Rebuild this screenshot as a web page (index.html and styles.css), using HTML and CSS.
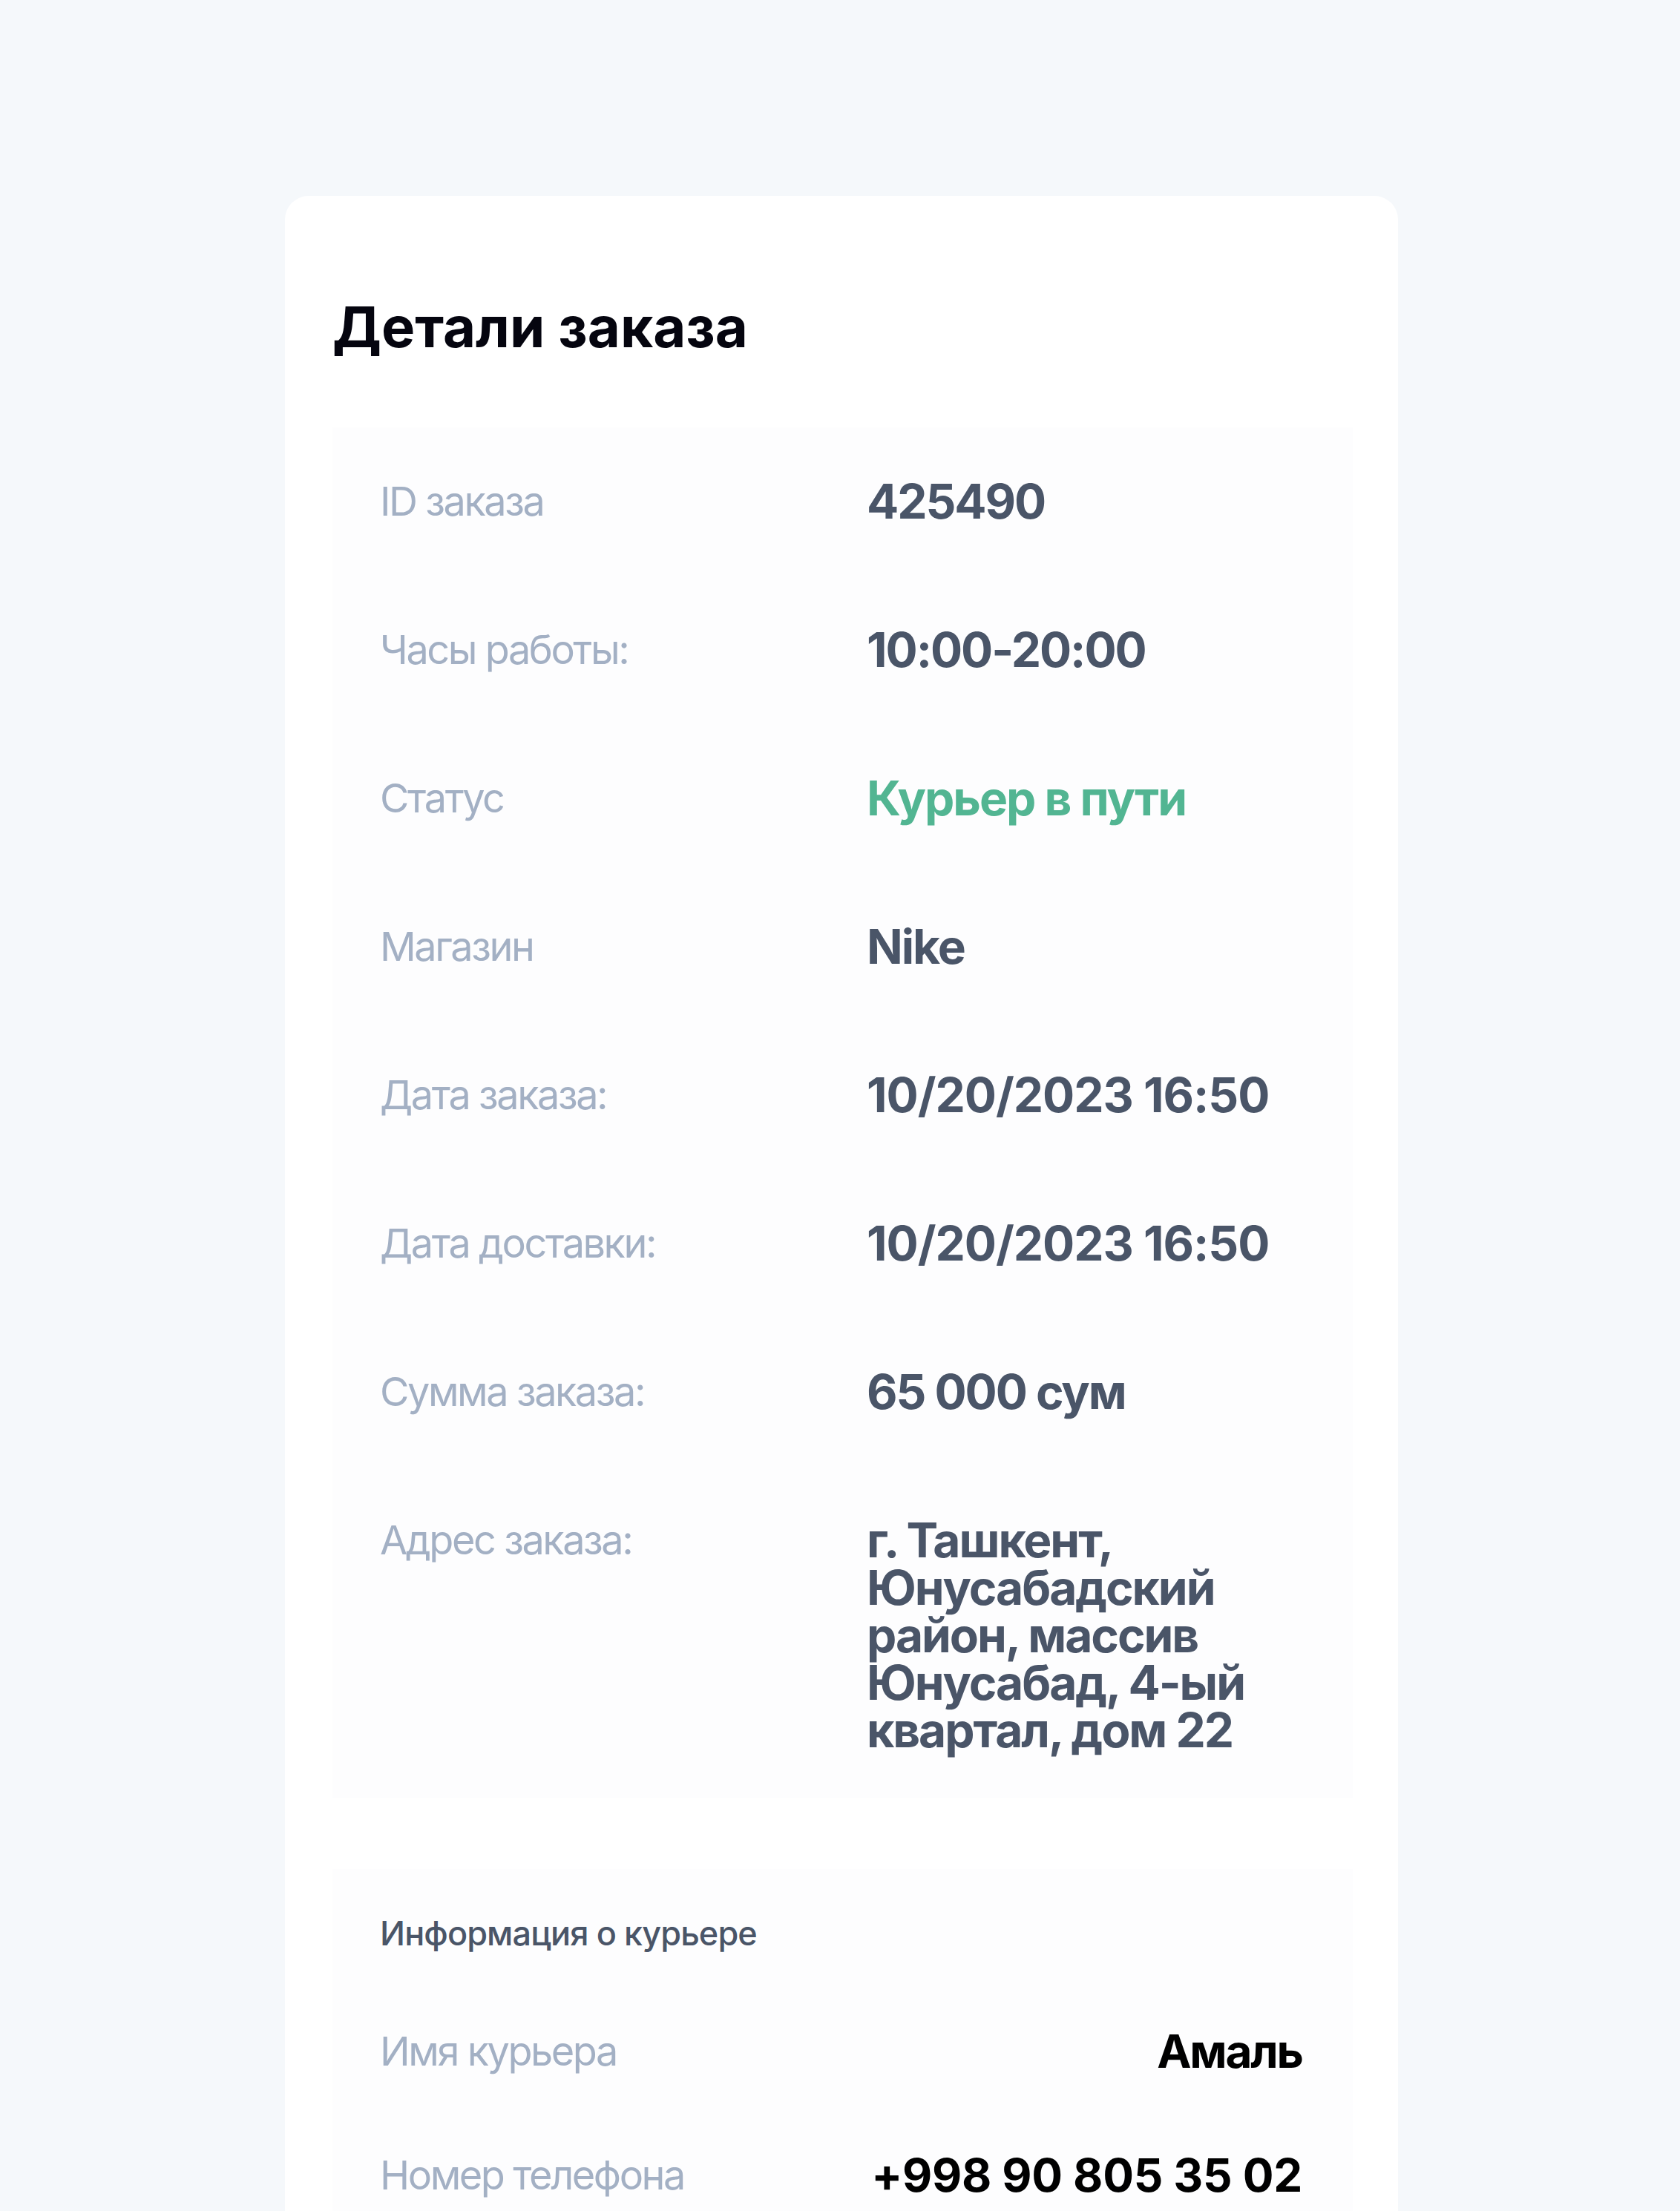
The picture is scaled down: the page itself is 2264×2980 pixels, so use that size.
FILE: index.html
```html
<!DOCTYPE html>
<html lang="ru">
<head>
<meta charset="utf-8">
<title>Детали заказа</title>
<link rel="stylesheet" href="styles.css">
</head>
<body>
<main class="card">
  <h1 class="card-title">Детали заказа</h1>

  <section class="panel details">
    <div class="row"><div class="label">ID заказа</div><div class="value">425490</div></div>
    <div class="row"><div class="label">Часы работы:</div><div class="value">10:00-20:00</div></div>
    <div class="row"><div class="label">Статус</div><div class="value status">Курьер в пути</div></div>
    <div class="row"><div class="label">Магазин</div><div class="value">Nike</div></div>
    <div class="row"><div class="label">Дата заказа:</div><div class="value date">10/20/2023 16:50</div></div>
    <div class="row"><div class="label">Дата доставки:</div><div class="value date">10/20/2023 16:50</div></div>
    <div class="row"><div class="label">Сумма заказа:</div><div class="value">65 000 сум</div></div>
    <div class="row"><div class="label">Адрес заказа:</div><div class="value">г. Ташкент, Юнусабадский район, массив Юнусабад, 4-ый квартал, дом 22</div></div>
  </section>

  <section class="panel courier">
    <h2 class="courier-title">Информация о курьере</h2>
    <div class="c-row"><div class="label">Имя курьера</div><div class="c-value">Амаль</div></div>
    <div class="c-row"><div class="label">Номер телефона</div><div class="c-value phone">+998 90 805 35 02</div></div>
  </section>
</main>
</body>
</html>
```

FILE: styles.css
```css
* { box-sizing: border-box; }

html, body {
  margin: 0;
  padding: 0;
  background: #f5f8fb;
  font-family: Inter, "Noto Sans", "Liberation Sans", sans-serif;
}

.card {
  width: 1500px;
  margin: 264px 0 0 384px;
  padding: 130px 61px 64px 64px;
  background: #ffffff;
  border-radius: 32px 32px 0 0;
}

.card-title {
  margin: 0 0 90px;
  font-size: 76px;
  line-height: 92px;
  font-weight: 700;
  color: #05050f;
  letter-spacing: 0;
}

.panel {
  background: #fdfdfe;
  padding: 0 64px 0 64px;
}

.details .row {
  display: grid;
  grid-template-columns: 656px 1fr;
  padding: 68px 0;
}

.details .row:last-child {
  padding-bottom: 59px;
}

.label {
  font-size: 54px;
  line-height: 64px;
  font-weight: 400;
  color: #a3b0c4;
  letter-spacing: -0.045em;
}

.value {
  font-size: 64px;
  line-height: 64px;
  font-weight: 700;
  color: #4a5568;
  letter-spacing: -0.032em;
}

.value.date {
  letter-spacing: -0.016em;
}

.value.status {
  color: #52b592;
}

.courier {
  margin-top: 96px;
  padding-top: 60px;
  padding-right: 68px;
  padding-bottom: 64px;
}

.courier-title {
  margin: 0 0 48px;
  font-size: 45px;
  line-height: 54px;
  font-weight: 500;
  color: #4a5568;
  letter-spacing: -0.02em;
}

.c-row {
  display: flex;
  justify-content: space-between;
  align-items: center;
  height: 167px;
}

.c-value {
  font-size: 62px;
  line-height: 64px;
  font-weight: 700;
  color: #000000;
  letter-spacing: -0.035em;
}

.c-value.phone {
  letter-spacing: -0.005em;
}
```
